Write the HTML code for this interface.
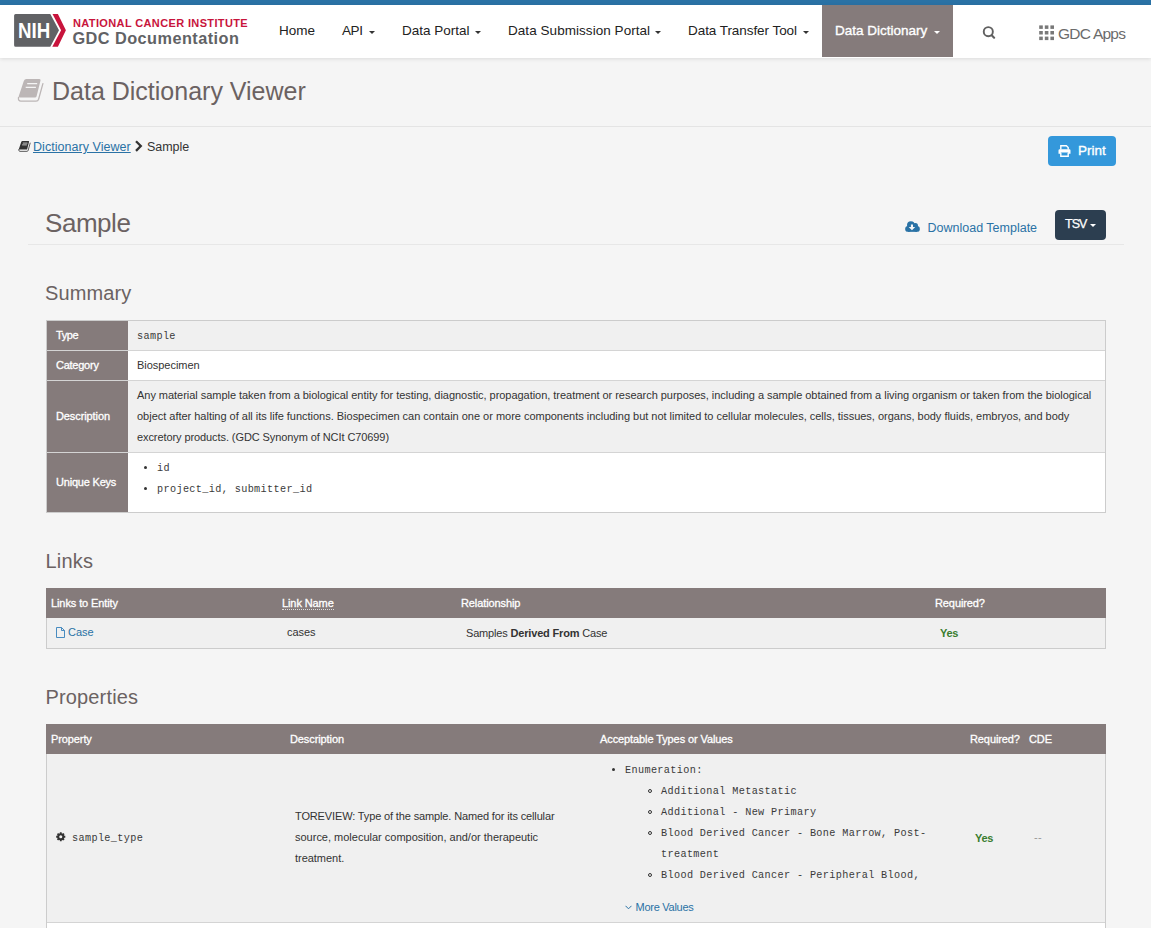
<!DOCTYPE html>
<html lang="en">
<head>
<meta charset="utf-8">
<title>Sample - GDC Docs</title>
<style>
*{box-sizing:border-box}
html,body{margin:0;padding:0}
body{width:1151px;height:928px;overflow:hidden;background:#f5f5f5;font-family:"Liberation Sans",Arial,sans-serif;font-size:14px;color:#333;position:relative}
a{color:#2a72a5;text-decoration:none}
.abs{position:absolute;white-space:nowrap}
#topbar{position:absolute;left:0;top:0;width:1151px;height:5px;background:#2a72a5}
#nav{position:absolute;left:0;top:5px;width:1151px;height:53px;background:#fff;box-shadow:0 1px 4px rgba(0,0,0,.11)}
.ni{position:absolute;top:0;height:52px;line-height:52px;font-size:13.5px;color:#222;white-space:nowrap}
.caret{position:absolute;width:0;height:0;border-left:3px solid transparent;border-right:3px solid transparent;border-top:3px solid currentColor;top:26px}
#active{position:absolute;left:822px;top:0;width:131px;height:52px;background:#857b7b}
h1,h2{margin:0;font-weight:normal;color:#6b6262}
.mono{font-family:"Liberation Mono","DejaVu Sans Mono",monospace}
.th{font-size:11px;color:#fff;letter-spacing:-.1px;-webkit-text-stroke:.3px #fff}
.td{font-size:11px;color:#333;letter-spacing:-.035px}
.mono.td{font-size:10.2px;letter-spacing:.36px;color:#3a3a3a;margin-top:1px}
.bul{width:3px;height:3px;border-radius:50%;background:#333}
.cir{width:4px;height:4px;border-radius:50%;border:1px solid #333}
</style>
</head>
<body>
<div id="topbar"></div>
<nav id="nav">
  <svg class="abs" style="left:14px;top:9px" width="54" height="34" viewBox="0 0 54 34">
    <path d="M1.6 .1H36.3L45 16.2 36.3 32.8H1.6A1.5 1.5 0 0 1 .1 31.3V1.6A1.5 1.5 0 0 1 1.6 .1Z" fill="#616265"/>
    <path d="M38.5 .1H43.9L51.9 16.2 43.9 32.8H38.3L47.1 16.2Z" fill="#c8143c"/>
  </svg>
  <div class="abs" style="left:18.4px;top:14px;font-size:21.5px;font-weight:bold;color:#fff;line-height:24px;transform-origin:0 0;transform:scaleX(.87)">NIH</div>
  <div class="abs" style="left:73px;top:11px;font-size:11px;font-weight:bold;color:#c8143c;letter-spacing:.37px;line-height:14px">NATIONAL CANCER INSTITUTE</div>
  <div class="abs" style="left:72.5px;top:22px;font-size:16.3px;font-weight:bold;color:#616265;line-height:22px;letter-spacing:.45px">GDC Documentation</div>
  <div id="active"></div>
  <div class="ni" style="left:279px">Home</div>
  <div class="ni" style="left:342px;letter-spacing:-.4px">API</div><span class="caret" style="left:369px"></span>
  <div class="ni" style="left:402px">Data Portal</div><span class="caret" style="left:475px"></span>
  <div class="ni" style="left:508px;letter-spacing:.05px">Data Submission Portal</div><span class="caret" style="left:655px"></span>
  <div class="ni" style="left:688px;letter-spacing:-.06px">Data Transfer Tool</div><span class="caret" style="left:803px"></span>
  <div class="ni" style="left:835px;color:#fff;-webkit-text-stroke:.35px #fff">Data Dictionary</div><span class="caret" style="left:934px;color:#fff"></span>
  <svg class="abs" style="left:982px;top:20px" width="14" height="14" viewBox="0 0 14 14"><circle cx="6.3" cy="6.7" r="4.55" fill="none" stroke="#606060" stroke-width="1.9"/><path d="M9.7 10.2L12.1 12.7" stroke="#606060" stroke-width="2.1" stroke-linecap="round"/></svg>
  <svg class="abs" style="left:1039px;top:20px" width="16" height="16" viewBox="0 0 16 16" fill="#787878"><rect x="0.2" y="0.4" width="3.6" height="3.5"/><rect x="5.8" y="0.4" width="3.6" height="3.5"/><rect x="11.4" y="0.4" width="3.6" height="3.5"/><rect x="0.2" y="6.0" width="3.6" height="3.5"/><rect x="5.8" y="6.0" width="3.6" height="3.5"/><rect x="11.4" y="6.0" width="3.6" height="3.5"/><rect x="0.2" y="11.6" width="3.6" height="3.5"/><rect x="5.8" y="11.6" width="3.6" height="3.5"/><rect x="11.4" y="11.6" width="3.6" height="3.5"/></svg>
  <div class="abs" style="left:1058px;top:.5px;line-height:56px;font-size:15.5px;color:#6b6b6b;letter-spacing:-.75px">GDC Apps</div>
</nav>

<!-- page header -->
<svg class="abs" style="left:17px;top:77px" width="28" height="26" viewBox="0 0 28 26"><path d="M9.4 2.1H22.4Q23.9 2.1 23.5 3.6L19.6 19.3Q19.3 20.5 18 20.5H2.9Q1.4 20.5 1.8 19L6.8 4Q7.5 2.1 9.4 2.1Z" fill="#bcb6b6"/><path d="M1.5 20.3Q.9 24.2 4 24.2H19Q21 24.2 21.6 22.2L25.9 6.6" fill="none" stroke="#bcb6b6" stroke-width="1.3" stroke-linecap="round"/><path d="M10.2 6.6H20.2M8.7 10.4H18.9" stroke="#f5f5f5" stroke-width="1.4"/></svg>
<h1 class="abs" style="left:52px;top:74px;font-size:25px;line-height:34px;letter-spacing:0">Data Dictionary Viewer</h1>
<div class="abs" style="left:0;top:126px;width:1151px;height:1px;background:#e4e4e4"></div>

<!-- breadcrumb -->
<svg class="abs" style="left:18px;top:140.1px" width="13.2" height="12.2" viewBox="0 0 28 26"><path d="M9.4 2.1H22.4Q23.9 2.1 23.5 3.6L19.6 19.3Q19.3 20.5 18 20.5H2.9Q1.4 20.5 1.8 19L6.8 4Q7.5 2.1 9.4 2.1Z" fill="#333"/><path d="M1.5 20.3Q.9 24.2 4 24.2H19Q21 24.2 21.6 22.2L25.9 6.6" fill="none" stroke="#333" stroke-width="1.7" stroke-linecap="round"/><path d="M10.2 6.6H20.2M8.7 10.4H18.9" stroke="#ddd" stroke-width="1.8"/></svg>
<a class="abs" style="left:33px;top:139px;font-size:12.5px;line-height:17px;text-decoration:underline;text-underline-offset:1px;letter-spacing:.04px">Dictionary Viewer</a>
<svg class="abs" style="left:134px;top:140px" width="10" height="12" viewBox="0 0 10 12"><path d="M2 1.2L6.8 6 2 10.9" fill="none" stroke="#333" stroke-width="2.3"/></svg>
<div class="abs" style="left:147px;top:139px;font-size:12.5px;line-height:17px;color:#333;letter-spacing:-.05px">Sample</div>

<!-- print button -->
<div class="abs" style="left:1048px;top:136px;width:68px;height:30px;background:#3498db;border-radius:4px"></div>
<svg class="abs" style="left:1058px;top:145px" width="13" height="12" viewBox="0 0 14 13"><path d="M3 5V.8H9L11 2.8V5" fill="none" stroke="#fff" stroke-width="1.5"/><path d="M1.8 4.6H12.2Q13.5 4.6 13.5 5.9V9.6H11V8H3V9.6H.5V5.9Q.5 4.6 1.8 4.6Z" fill="#fff"/><path d="M3 8.5V12.2H11V8.5" fill="none" stroke="#fff" stroke-width="1.5"/></svg>
<div class="abs" style="left:1078px;top:136px;line-height:30px;font-size:13.5px;color:#fff;-webkit-text-stroke:.35px #fff">Print</div>

<!-- Sample heading -->
<h1 class="abs" style="left:45px;top:206px;font-size:26px;line-height:34px;letter-spacing:-.45px">Sample</h1>
<div class="abs" style="left:28px;top:244px;width:1096px;height:1px;background:#e7e7e7"></div>
<svg class="abs" style="left:905px;top:221px" width="15" height="11" viewBox="0 0 15 11"><g fill="#2a72a5"><circle cx="3.1" cy="7.9" r="2.95"/><circle cx="5.9" cy="4.1" r="3.9"/><circle cx="10.4" cy="4.7" r="2.6"/><circle cx="11.9" cy="7.9" r="2.95"/><rect x="3" y="5" width="9" height="5.85"/></g><path d="M5.9 3.5H8V6.1H10.2L6.95 9.2 3.7 6.1H5.9Z" fill="#f5f5f5"/></svg>
<a class="abs" style="left:927.5px;top:220px;font-size:12.5px;line-height:17px">Download Template</a>
<div class="abs" style="left:1055px;top:210px;width:51px;height:30px;background:#2c3e50;border-radius:4px"></div>
<div class="abs" style="left:1065px;top:210px;line-height:29px;font-size:12.5px;color:#fff;letter-spacing:-1px;-webkit-text-stroke:.25px #fff">TSV</div><span class="caret" style="left:1090px;top:224px;color:#fff"></span>

<!-- Summary -->
<h2 class="abs" style="left:45px;top:280px;font-size:20px;line-height:26px;letter-spacing:.1px">Summary</h2>
<div class="abs" id="sum" style="left:46px;top:320px;width:1060px;height:193px;border:1px solid #ccc;background:#fff">
  <div class="abs" style="left:0;top:0;width:81px;height:191px;background:#857b7b"></div>
  <div class="abs" style="left:81px;top:0;width:977px;height:29px;background:#f0f0f0"></div>
  <div class="abs" style="left:81px;top:59px;width:977px;height:72px;background:#f0f0f0"></div>
  <div class="abs" style="left:0;top:29px;width:1058px;height:1px;background:#d4d4d4"></div>
  <div class="abs" style="left:0;top:59px;width:1058px;height:1px;background:#d4d4d4"></div>
  <div class="abs" style="left:0;top:131px;width:1058px;height:1px;background:#d4d4d4"></div>
  <div class="abs th" style="left:9px;top:0;line-height:29px;letter-spacing:-.45px">Type</div>
  <div class="abs th" style="left:9px;top:30px;line-height:29px;letter-spacing:-.25px">Category</div>
  <div class="abs th" style="left:9px;top:60px;line-height:71px">Description</div>
  <div class="abs th" style="left:9px;top:132px;line-height:59px;letter-spacing:-.2px">Unique Keys</div>
  <div class="abs mono td" style="left:90px;top:0;line-height:29px">sample</div>
  <div class="abs td" style="left:90px;top:30px;line-height:29px">Biospecimen</div>
  <div class="abs td" style="left:90px;top:64px;line-height:21px">Any material sample taken from a biological entity for testing, diagnostic, propagation, treatment or research purposes, including a sample obtained from a living organism or taken from the biological</div>
  <div class="abs td" style="left:90px;top:85px;line-height:21px;letter-spacing:-.016px">object after halting of all its life functions. Biospecimen can contain one or more components including but not limited to cellular molecules, cells, tissues, organs, body fluids, embryos, and body</div>
  <div class="abs td" style="left:90px;top:106px;line-height:21px;letter-spacing:-.087px">excretory products. (GDC Synonym of NCIt C70699)</div>
  <div class="abs bul" style="left:97px;top:145px"></div>
  <div class="abs mono td" style="left:110px;top:136px;line-height:21px">id</div>
  <div class="abs bul" style="left:97px;top:166px"></div>
  <div class="abs mono td" style="left:110px;top:157px;line-height:21px">project_id, submitter_id</div>
</div>

<!-- Links -->
<h2 class="abs" style="left:45.5px;top:548px;font-size:20px;line-height:26px;letter-spacing:.2px">Links</h2>
<div class="abs" style="left:46px;top:588px;width:1060px;height:61px;border:1px solid #ccc;background:#f0f0f0">
  <div class="abs" style="left:-1px;top:-1px;width:1060px;height:30px;background:#857b7b"></div>
  <div class="abs th" style="left:4px;top:0;line-height:28px">Links to Entity</div>
  <div class="abs th" style="left:235px;top:0;line-height:28px"><span style="border-bottom:1px dotted #ddd;padding-bottom:0px;line-height:12px;display:inline-block">Link Name</span></div>
  <div class="abs th" style="left:414px;top:0;line-height:28px">Relationship</div>
  <div class="abs th" style="left:888px;top:0;line-height:28px">Required?</div>
  <svg class="abs" style="left:9px;top:38px" width="9" height="11" viewBox="0 0 9 11"><path d="M.5 .5H5.5L8.5 3.5V10.5H.5Z" fill="none" stroke="#3580ba" stroke-width=".9"/><path d="M5.5 .5V3.5H8.5" fill="none" stroke="#3580ba" stroke-width=".9"/></svg>
  <a class="abs td" style="left:21px;top:29px;line-height:29px;color:#2a72a5">Case</a>
  <div class="abs td" style="left:240px;top:29px;line-height:29px">cases</div>
  <div class="abs td" style="left:419px;top:30px;line-height:29px;letter-spacing:-.17px">Samples <b>Derived From</b> Case</div>
  <div class="abs td" style="left:893px;top:30px;line-height:29px;color:#3a7d2f;font-weight:bold;letter-spacing:-.3px">Yes</div>
</div>

<!-- Properties -->
<h2 class="abs" style="left:45.5px;top:684px;font-size:20px;line-height:26px;letter-spacing:.15px">Properties</h2>
<div class="abs" style="left:46px;top:724px;width:1060px;height:215px;border:1px solid #ccc;background:#f0f0f0">
  <div class="abs" style="left:-1px;top:-1px;width:1060px;height:30px;background:#857b7b"></div>
  <div class="abs th" style="left:4px;top:0;line-height:28px">Property</div>
  <div class="abs th" style="left:243px;top:0;line-height:28px">Description</div>
  <div class="abs th" style="left:553px;top:0;line-height:28px">Acceptable Types or Values</div>
  <div class="abs th" style="left:923px;top:0;line-height:28px">Required?</div>
  <div class="abs th" style="left:982px;top:0;line-height:28px">CDE</div>
  <div class="abs" style="left:0;top:197px;width:1058px;height:1px;background:#d4d4d4"></div>
  <div class="abs" style="left:0;top:198px;width:1058px;height:20px;background:#fff"></div>
  <svg class="abs" style="left:9px;top:107px" width="9.5" height="9.5" viewBox="0 0 10 10"><circle cx="5" cy="5" r="2.7" fill="none" stroke="#333" stroke-width="2.2"/><g stroke="#333" stroke-width="1.9"><path d="M5 .2V9.8M.2 5H9.8M1.6 1.6L8.4 8.4M8.4 1.6L1.6 8.4"/></g><circle cx="5" cy="5" r="1.6" fill="#f0f0f0"/></svg>
  <div class="abs mono td" style="left:25px;top:102px;line-height:21px">sample_type</div>
  <div class="abs td" style="left:248px;top:81px;line-height:21px;letter-spacing:-.137px">TOREVIEW: Type of the sample. Named for its cellular</div>
  <div class="abs td" style="left:248px;top:102px;line-height:21px;letter-spacing:-.005px">source, molecular composition, and/or therapeutic</div>
  <div class="abs td" style="left:248px;top:123px;line-height:21px">treatment.</div>
  <div class="abs bul" style="left:565px;top:43px"></div>
  <div class="abs mono td" style="left:578px;top:34px;line-height:21px">Enumeration:</div>
  <div class="abs cir" style="left:601px;top:64px"></div>
  <div class="abs mono td" style="left:614px;top:55px;line-height:21px">Additional Metastatic</div>
  <div class="abs cir" style="left:601px;top:85px"></div>
  <div class="abs mono td" style="left:614px;top:76px;line-height:21px">Additional - New Primary</div>
  <div class="abs cir" style="left:601px;top:106px"></div>
  <div class="abs mono td" style="left:614px;top:97px;line-height:21px">Blood Derived Cancer - Bone Marrow, Post-</div>
  <div class="abs mono td" style="left:614px;top:118px;line-height:21px">treatment</div>
  <div class="abs cir" style="left:601px;top:148px"></div>
  <div class="abs mono td" style="left:614px;top:139px;line-height:21px">Blood Derived Cancer - Peripheral Blood,</div>
  <svg class="abs" style="left:578px;top:180px" width="7" height="5" viewBox="0 0 7 5"><path d="M.5 .8L3.5 3.8 6.5 .8" fill="none" stroke="#2a72a5" stroke-width="1"/></svg>
  <a class="abs td" style="left:588.5px;top:172px;line-height:21px;color:#2a72a5;letter-spacing:-.26px">More Values</a>
  <div class="abs td" style="left:928px;top:103px;line-height:21px;color:#3a7d2f;font-weight:bold;letter-spacing:-.3px">Yes</div>
  <div class="abs td" style="left:987px;top:101.5px;line-height:21px;color:#999;letter-spacing:.3px">--</div>
</div>
</body>
</html>
